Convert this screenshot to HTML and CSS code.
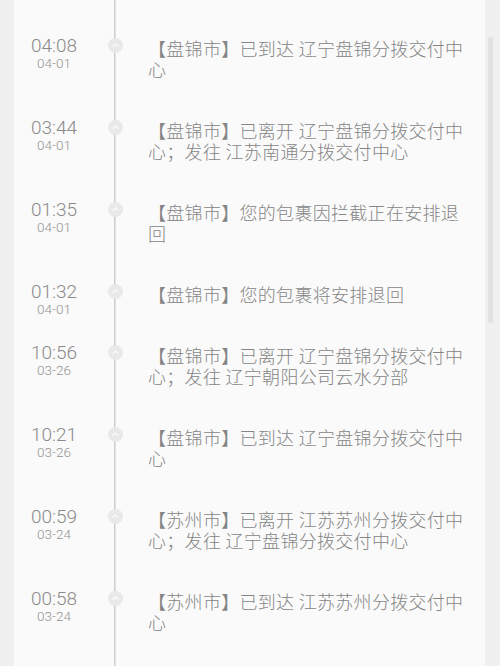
FILE: index.html
```html
<!DOCTYPE html>
<html lang="zh-CN">
<head>
    <meta charset="UTF-8">
    <meta name="viewport" content="width=device-width, initial-scale=1.0">
    <title>物流详情</title>
    <link rel="stylesheet" href="styles.css">
</head>
<body>
    <div class="page">
        <div class="side"></div>
        <div class="card">
            <div class="track">
                <div class="time"><div class="hm">04:08</div><div class="day">04-01</div></div>
                <div class="node"><svg width="15" height="15" viewBox="0 0 15 15"><circle cx="7.5" cy="7.5" r="7.5" fill="#e9e9e9"/><polyline points="4.6,8.8 7.5,6 10.4,8.8" fill="none" stroke="#fafafa" stroke-width="1.4"/></svg></div>
                <div class="desc">【盘锦市】已到达 辽宁盘锦分拨交付中心</div>
            </div>
            <div class="track">
                <div class="time"><div class="hm">03:44</div><div class="day">04-01</div></div>
                <div class="node"><svg width="15" height="15" viewBox="0 0 15 15"><circle cx="7.5" cy="7.5" r="7.5" fill="#e9e9e9"/><polyline points="4.6,8.8 7.5,6 10.4,8.8" fill="none" stroke="#fafafa" stroke-width="1.4"/></svg></div>
                <div class="desc">【盘锦市】已离开 辽宁盘锦分拨交付中心；发往 江苏南通分拨交付中心</div>
            </div>
            <div class="track">
                <div class="time"><div class="hm">01:35</div><div class="day">04-01</div></div>
                <div class="node"><svg width="15" height="15" viewBox="0 0 15 15"><circle cx="7.5" cy="7.5" r="7.5" fill="#e9e9e9"/><polyline points="4.6,8.8 7.5,6 10.4,8.8" fill="none" stroke="#fafafa" stroke-width="1.4"/></svg></div>
                <div class="desc">【盘锦市】您的包裹因拦截正在安排退回</div>
            </div>
            <div class="track">
                <div class="time"><div class="hm">01:32</div><div class="day">04-01</div></div>
                <div class="node"><svg width="15" height="15" viewBox="0 0 15 15"><circle cx="7.5" cy="7.5" r="7.5" fill="#e9e9e9"/><polyline points="4.6,8.8 7.5,6 10.4,8.8" fill="none" stroke="#fafafa" stroke-width="1.4"/></svg></div>
                <div class="desc">【盘锦市】您的包裹将安排退回</div>
            </div>
            <div class="track">
                <div class="time"><div class="hm">10:56</div><div class="day">03-26</div></div>
                <div class="node"><svg width="15" height="15" viewBox="0 0 15 15"><circle cx="7.5" cy="7.5" r="7.5" fill="#e9e9e9"/><polyline points="4.6,8.8 7.5,6 10.4,8.8" fill="none" stroke="#fafafa" stroke-width="1.4"/></svg></div>
                <div class="desc">【盘锦市】已离开 辽宁盘锦分拨交付中心；发往 辽宁朝阳公司云水分部</div>
            </div>
            <div class="track">
                <div class="time"><div class="hm">10:21</div><div class="day">03-26</div></div>
                <div class="node"><svg width="15" height="15" viewBox="0 0 15 15"><circle cx="7.5" cy="7.5" r="7.5" fill="#e9e9e9"/><polyline points="4.6,8.8 7.5,6 10.4,8.8" fill="none" stroke="#fafafa" stroke-width="1.4"/></svg></div>
                <div class="desc">【盘锦市】已到达 辽宁盘锦分拨交付中心</div>
            </div>
            <div class="track">
                <div class="time"><div class="hm">00:59</div><div class="day">03-24</div></div>
                <div class="node"><svg width="15" height="15" viewBox="0 0 15 15"><circle cx="7.5" cy="7.5" r="7.5" fill="#e9e9e9"/><polyline points="4.6,8.8 7.5,6 10.4,8.8" fill="none" stroke="#fafafa" stroke-width="1.4"/></svg></div>
                <div class="desc">【苏州市】已离开 江苏苏州分拨交付中心；发往 辽宁盘锦分拨交付中心</div>
            </div>
            <div class="track">
                <div class="time"><div class="hm">00:58</div><div class="day">03-24</div></div>
                <div class="node"><svg width="15" height="15" viewBox="0 0 15 15"><circle cx="7.5" cy="7.5" r="7.5" fill="#e9e9e9"/><polyline points="4.6,8.8 7.5,6 10.4,8.8" fill="none" stroke="#fafafa" stroke-width="1.4"/></svg></div>
                <div class="desc">【苏州市】已到达 江苏苏州分拨交付中心</div>
            </div>
        </div>
        <div class="gutter"><div class="thumb"></div></div>
    </div>
</body>
</html>
```

FILE: styles.css
```css
html, body {
    margin: 0;
    height: 100%;
    overflow: hidden;
}
body {
    background-color: #f0f0f0;
    font-family: Roboto, "Noto Sans CJK SC", sans-serif;
}
.page {
    display: flex;
    height: 666px;
}
.side {
    width: 14px;
    background-color: #efefef;
}
.card {
    width: 471px;
    padding-top: 36px;
    box-sizing: border-box;
    background-color: #fafafa;
    background-image: linear-gradient(#cdcdcd, #cdcdcd);
    background-repeat: no-repeat;
    background-position: 100px 0;
    background-size: 1.5px 100%;
    overflow: hidden;
}
.track {
    display: flex;
    align-items: flex-start;
}
.time {
    width: 80px;
    text-align: center;
    color: #8a8a8a;
}
.hm {
    font-size: 19px;
    font-weight: 300;
    line-height: 20px;
}
.day {
    font-size: 13.5px;
    font-weight: 300;
    line-height: 14px;
    margin-top: 0;
    color: #939393;
}
.node {
    width: 42px;
    height: 15px;
    margin-top: 1.5px;
    display: flex;
    justify-content: center;
}
.desc {
    width: 325px;
    margin-left: 12px;
    margin-top: 2px;
    padding-bottom: 38px;
    font-family: "Noto Sans CJK SC", sans-serif;
    font-size: 18px;
    font-weight: 300;
    line-height: 21px;
    letter-spacing: 0.3px;
    color: #858585;
}
.gutter {
    width: 15px;
    background-color: #f0f0f0;
    padding-left: 3px;
    box-sizing: border-box;
}
.thumb {
    width: 5px;
    height: 286px;
    margin-top: 37px;
    border-radius: 2px;
    background-color: #e1e1e1;
}
```
